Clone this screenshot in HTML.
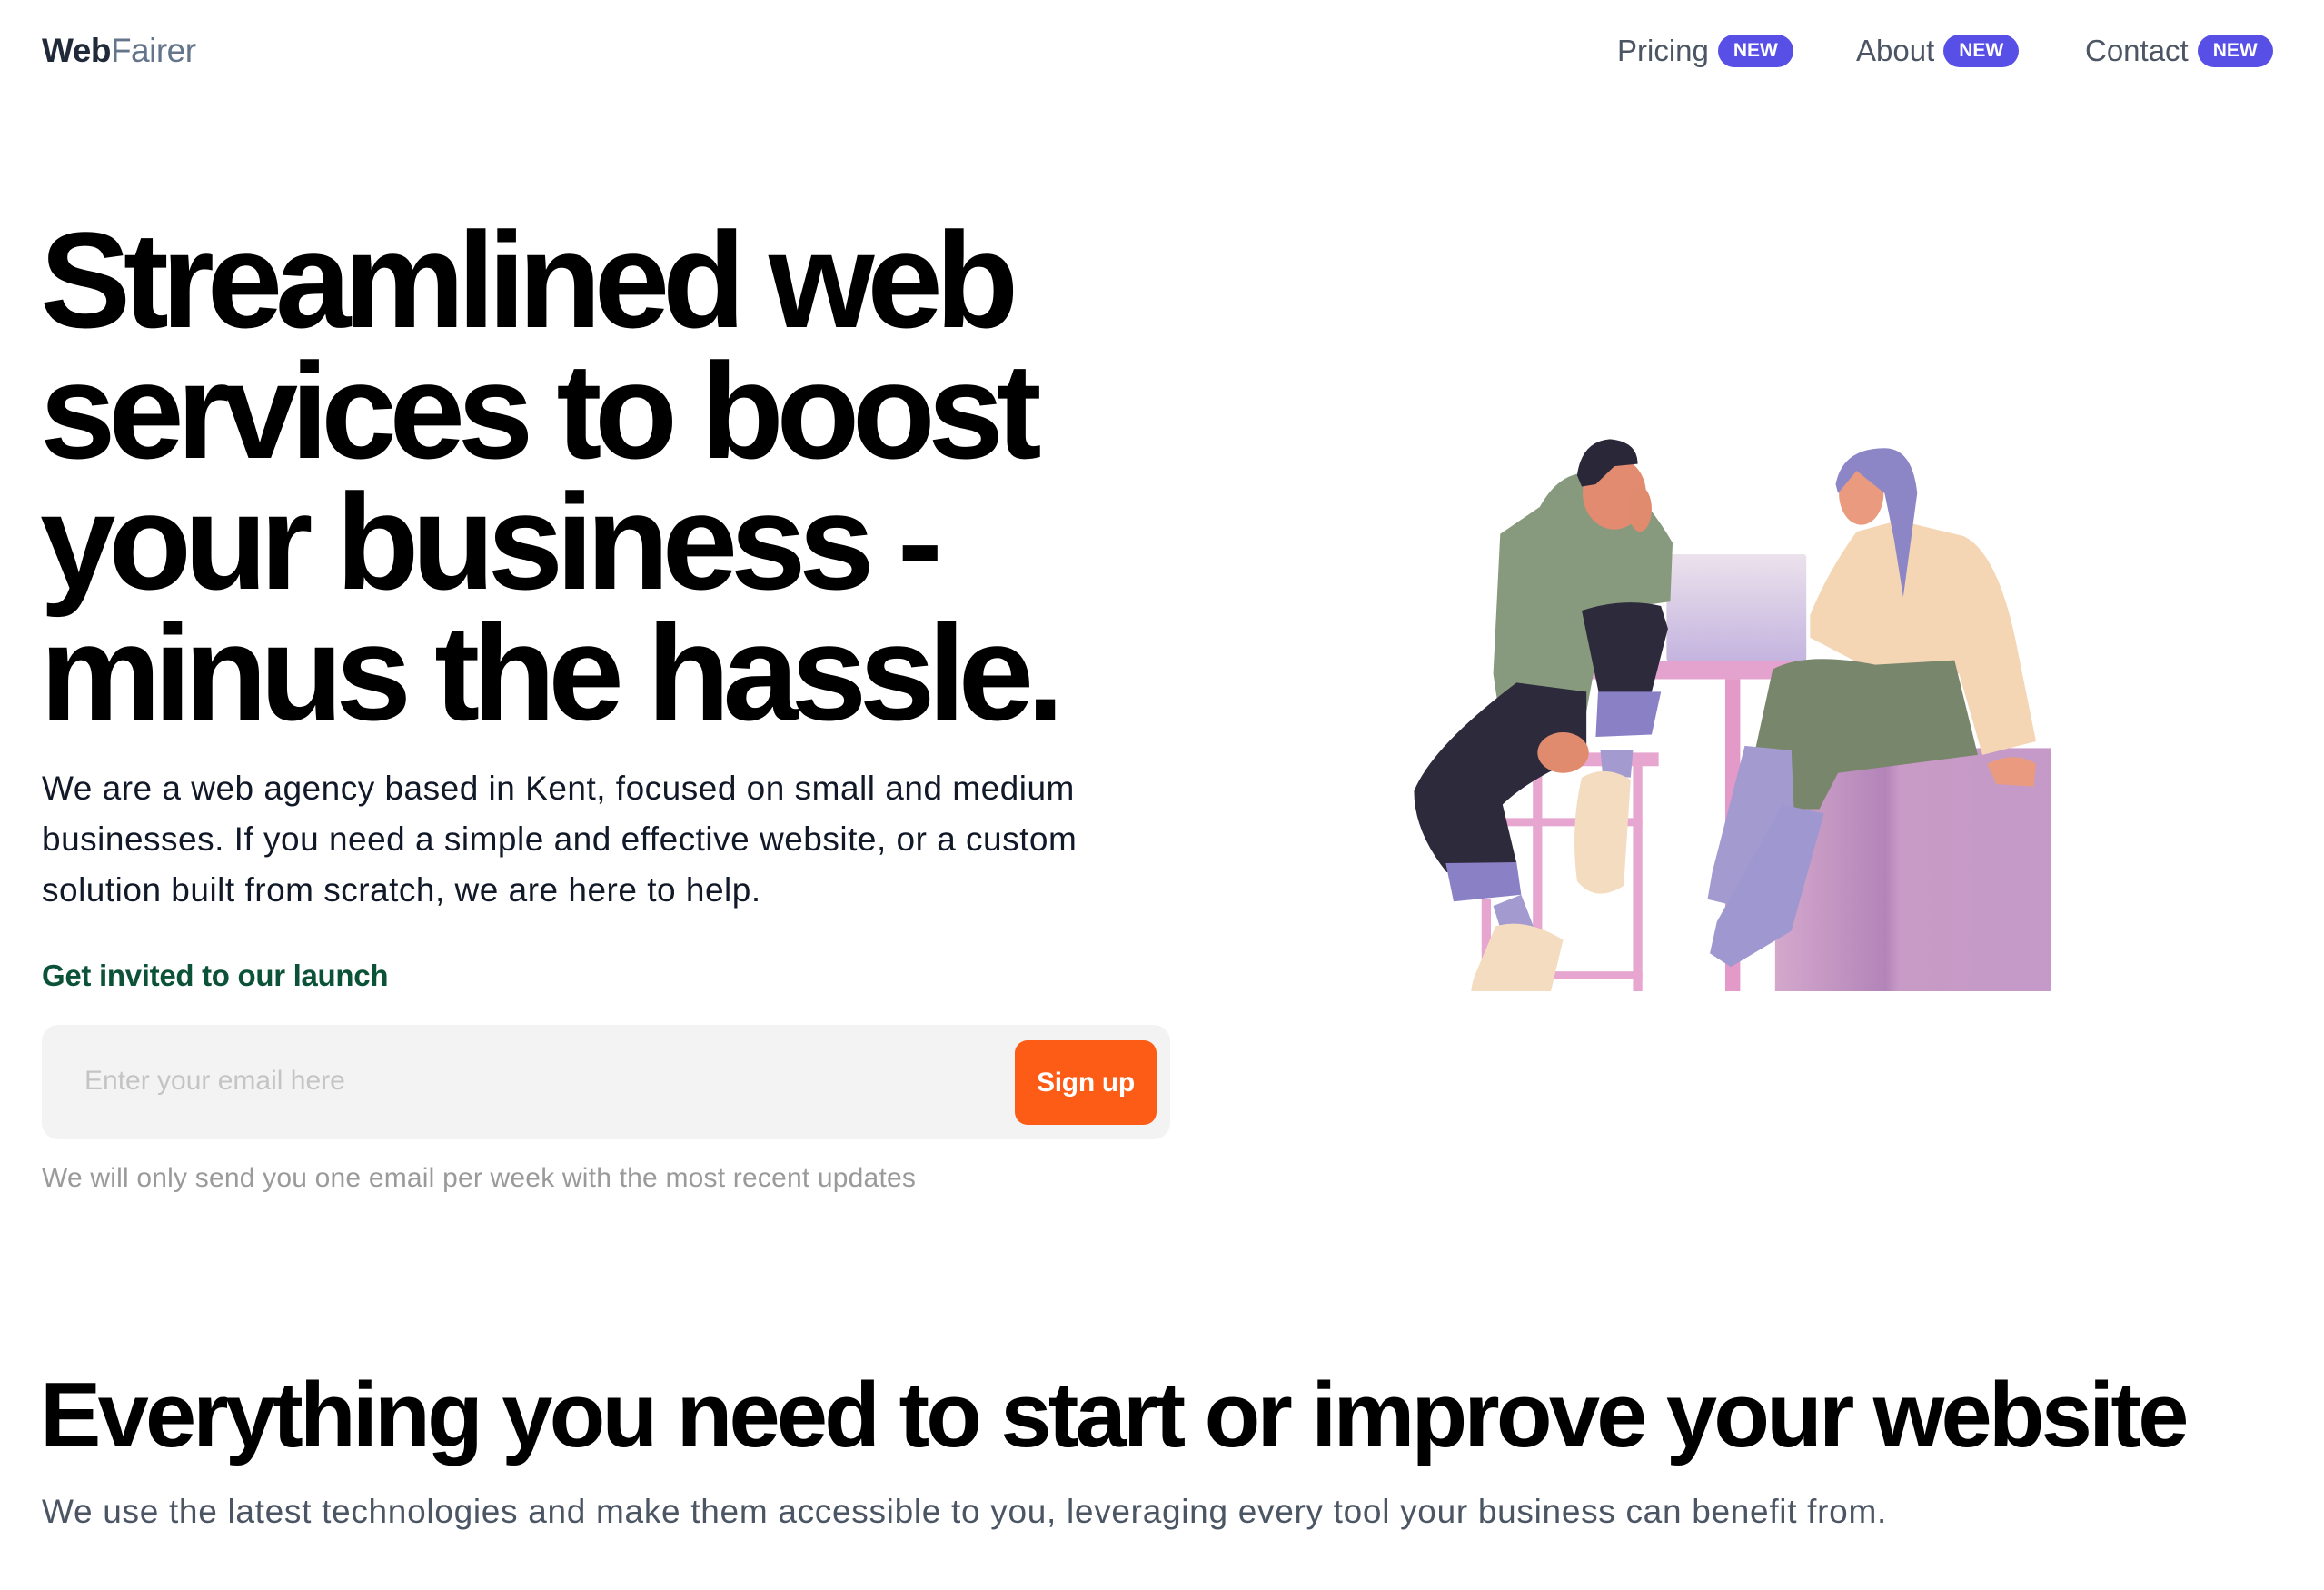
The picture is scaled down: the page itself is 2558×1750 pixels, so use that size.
<!DOCTYPE html>
<html><head><meta charset="utf-8"><style>
*{margin:0;padding:0;box-sizing:border-box}
body{width:2558px;height:1750px;background:#fff;font-family:"Liberation Sans",sans-serif;position:relative;overflow:hidden}
.a{position:absolute;white-space:nowrap}
.logo{left:46px;top:34px;font-size:37px;line-height:44px;letter-spacing:-0.5px}
.logo b{color:#1f2937}.logo span{color:#64748b}
.nav{top:35px;font-size:33px;line-height:42px;color:#4b5563;display:flex;align-items:center}
.badge{display:inline-block;background:#5850e6;color:#fff;font-weight:bold;font-size:21px;height:36px;line-height:36px;padding:0 17px;border-radius:18px;margin-left:10px}
h1{position:absolute;left:44px;top:236px;font-size:150px;line-height:144px;font-weight:bold;letter-spacing:-8.2px;color:#000;white-space:nowrap}
.p{left:46px;top:840px;font-size:37px;line-height:56px;color:#111827;letter-spacing:0.5px}
.g{left:46px;top:1055px;font-size:33px;font-weight:bold;color:#0b5238;letter-spacing:-0.3px}
.box{left:46px;top:1128px;width:1242px;height:126px;background:#f3f3f3;border-radius:18px}
.ph{left:93px;top:1173px;font-size:30px;color:#c4c4c4}
.btn{left:1117px;top:1145px;width:156px;height:93px;background:#fd5c17;border-radius:14px;color:#fff;font-weight:bold;font-size:30px;text-align:center;line-height:93px;letter-spacing:-0.3px}
.note{left:46px;top:1280px;font-size:30px;color:#9a9a9a;letter-spacing:0.2px}
h2{position:absolute;left:44px;top:1498px;font-size:101px;line-height:120px;font-weight:bold;letter-spacing:-3.8px;color:#000;white-space:nowrap}
.sub{left:46px;top:1643px;font-size:37px;color:#4b5563;letter-spacing:0.7px}
</style></head><body>
<div class="a logo"><b>Web</b><span>Fairer</span></div>
<div class="a nav" style="left:1780px">Pricing<span class="badge">NEW</span></div>
<div class="a nav" style="left:2043px">About<span class="badge">NEW</span></div>
<div class="a nav" style="left:2295px">Contact<span class="badge">NEW</span></div>
<h1>Streamlined web<br>services to boost<br>your business -<br>minus the hassle.</h1>
<div class="a p">We are a web agency based in Kent, focused on small and medium<br>businesses. If you need a simple and effective website, or a custom<br>solution built from scratch, we are here to help.</div>
<div class="a g">Get invited to our launch</div>
<div class="a box"></div>
<div class="a ph">Enter your email here</div>
<div class="a btn">Sign up</div>
<div class="a note">We will only send you one email per week with the most recent updates</div>
<svg class="a" style="left:1500px;top:394px" width="800" height="697" viewBox="0 0 1560 1404" preserveAspectRatio="none">
<defs>
<linearGradient id="bx" x1="0" x2="1"><stop offset="0" stop-color="#d4a8cc"/><stop offset=".4" stop-color="#b384b9"/><stop offset=".45" stop-color="#c89ac6"/><stop offset="1" stop-color="#c59ac8"/></linearGradient>
<linearGradient id="lp" x1="0" y1="0" x2="0" y2="1"><stop offset="0" stop-color="#ebe2ec"/><stop offset="1" stop-color="#c4b4df"/></linearGradient>
</defs>
<rect x="885" y="865" width="593" height="630" fill="url(#bx)"/>
<g fill="#e7a6d0">
<rect x="365" y="890" width="20" height="605"/><rect x="580" y="890" width="20" height="560"/>
<rect x="255" y="1200" width="20" height="295"/>
<rect x="355" y="875" width="280" height="30"/>
<rect x="300" y="1020" width="300" height="18"/><rect x="270" y="1360" width="330" height="16"/>
</g>
<rect x="425" y="672" width="665" height="40" fill="#e4a3cf"/>
<rect x="778" y="712" width="32" height="740" fill="#e39ac8"/>
<path d="M570 1495 L1020 1495 L1020 1480 L810 1440 L778 1440 L570 1480Z" fill="#e391c3"/>
<rect x="652" y="435" width="300" height="237" rx="6" fill="url(#lp)"/>
<path d="M380 330 Q420 255 480 255 L560 270 Q620 330 665 410 L660 540 L520 560 L470 840 L300 840 L280 700 L295 390Z" fill="#879a7d"/>
<path d="M470 560 Q560 530 640 550 L655 600 L620 740 L510 760 Z" fill="#2d2a3c"/>
<path d="M330 720 L480 740 L480 880 Q360 930 300 990 L330 1120 L180 1140 Q110 1050 110 960 Q150 860 330 720Z" fill="#2d2a3c"/>
<path d="M505 740 L640 740 L620 835 L500 840Z" fill="#8a80c6"/>
<path d="M178 1120 L330 1118 L340 1190 L195 1205Z" fill="#8a80c6"/>
<path d="M510 870 L580 870 L575 930 L515 925Z" fill="#a39bd0"/>
<path d="M280 1215 L340 1190 L370 1270 L300 1280Z" fill="#a39bd0"/>
<path d="M470 930 Q520 900 575 935 L560 1170 Q500 1210 460 1160 Q445 1040 470 930Z" fill="#f3dcc0"/>
<path d="M285 1260 Q350 1240 430 1290 L400 1420 L250 1470 Q220 1430 240 1370Z" fill="#f3dcc0"/>
<ellipse cx="430" cy="875" rx="55" ry="45" fill="#e08a6e"/>
<ellipse cx="540" cy="300" rx="68" ry="80" fill="#e38b70"/>
<path d="M460 260 Q470 185 530 180 Q590 185 590 235 L540 240 L500 280 L470 285Z" fill="#2a2838"/>
<ellipse cx="595" cy="335" rx="25" ry="50" fill="#e08a6e"/>
<path d="M1060 385 L1150 360 L1290 395 Q1360 430 1400 620 L1445 850 L1330 880 L1280 700 L1200 700 L1090 690 L960 620 L960 570 Q1000 470 1060 385Z" fill="#f4d6b4"/>
<path d="M880 690 Q950 650 1100 680 L1270 670 L1320 880 L1020 920 L980 1000 L910 1000 L840 880Z" fill="#78866c"/>
<path d="M820 860 L920 870 L930 1120 L820 1220 L740 1200 L750 1140Z" fill="#a39bd0"/>
<path d="M900 990 L990 1010 L920 1270 L790 1350 L745 1320 L760 1250Z" fill="#9f97cf"/>
<ellipse cx="1070" cy="300" rx="48" ry="70" fill="#e99a7f"/>
<path d="M1015 280 Q1030 200 1120 200 Q1180 200 1190 300 L1160 530 L1140 400 L1120 300 L1060 250 L1020 300Z" fill="#8c86c6"/>
<path d="M1340 900 Q1400 870 1445 900 L1440 950 L1360 945Z" fill="#e99a7f"/>
</svg>
<h2>Everything you need to start or improve your website</h2>
<div class="a sub">We use the latest technologies and make them accessible to you, leveraging every tool your business can benefit from.</div>
</body></html>
